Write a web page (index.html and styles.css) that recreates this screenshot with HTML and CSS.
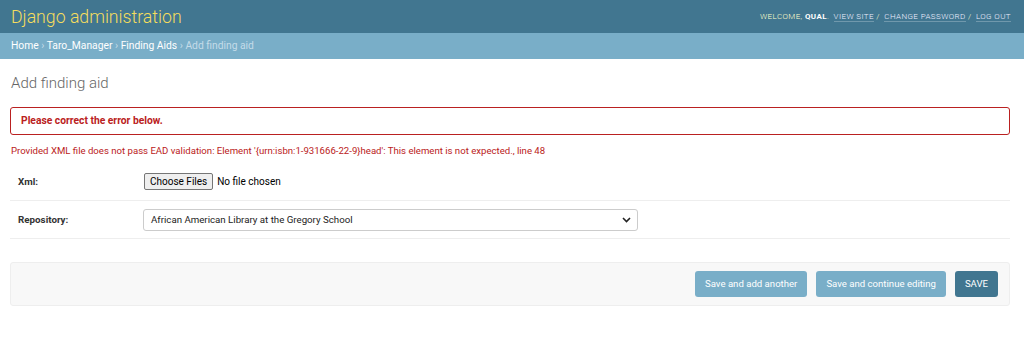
FILE: index.html
```html
<!DOCTYPE html>
<html lang="en">
<head>
<meta charset="utf-8">
<title>Add finding aid | Django site admin</title>
<link rel="stylesheet" href="styles.css">
</head>
<body>
<div id="header">
  <div id="branding"><h1 id="site-name"><a href="#">Django administration</a></h1></div>
  <div id="user-tools">
    Welcome, <strong>qual</strong>.
    <a href="#">View site</a> /
    <a href="#">Change password</a> /
    <a href="#">Log out</a>
  </div>
</div>

<div class="breadcrumbs">
  <a href="#">Home</a> &rsaquo; <a href="#">Taro_Manager</a> &rsaquo; <a href="#">Finding Aids</a> &rsaquo; Add finding aid
</div>

<div id="content">
  <h1>Add finding aid</h1>

  <form>
    <p class="errornote">Please correct the error below.</p>
    <ul class="errorlist nonfield">
      <li>Provided XML file does not pass EAD validation: Element '{urn:isbn:1-931666-22-9}head': This element is not expected., line 48</li>
    </ul>

    <fieldset class="module">
      <div class="form-row">
        <label class="required">Xml:</label>
        <div class="field">
          <span class="file-btn">Choose Files</span>
          <span class="file-none">No file chosen</span>
        </div>
      </div>
      <div class="form-row">
        <label class="required">Repository:</label>
        <div class="field">
          <div class="select">
            <span>African American Library at the Gregory School</span>
            <svg width="9" height="6" viewBox="0 0 9 6"><path d="M1 1l3.5 3.5L8 1" fill="none" stroke="#222" stroke-width="1.6"/></svg>
          </div>
        </div>
      </div>
    </fieldset>

    <div class="submit-row">
      <span class="btn">Save and add another</span>
      <span class="btn">Save and continue editing</span>
      <span class="btn default">SAVE</span>
    </div>
  </form>
</div>
</body>
</html>
```

FILE: styles.css
```css
body {
  margin: 0;
  font-family: Roboto, "Liberation Sans", Arial, sans-serif;
  font-size: 11px;
  color: #333;
  background: #fff;
}

a { text-decoration: none; }

#header {
  display: flex;
  align-items: center;
  justify-content: space-between;
  height: 33px;
  padding: 0 13px 0 11px;
  background: #417690;
  color: #ffc;
  box-sizing: border-box;
}

#site-name { margin: 0; font-size: 17.7px; font-weight: 300; }
#site-name a { color: #f5dd5d; }

#user-tools {
  font-size: 8px;
  font-weight: 300;
  letter-spacing: 0.4px;
  text-transform: uppercase;
  color: #ffc;
  padding-bottom: 1px;
}
#user-tools strong { font-weight: 700; color: #fff; }
#user-tools a {
  color: #eef;
  border-bottom: 1px solid rgba(255, 255, 255, 0.25);
  margin-left: 2px;
}

.breadcrumbs {
  height: 26px;
  line-height: 26px;
  padding: 0 11px;
  background: #79aec8;
  color: #c4dce8;
  font-size: 10.3px;
}
.breadcrumbs a { color: #fff; }

#content { padding: 14px 14px 0 10px; }

#content h1 {
  margin: 0 0 14px 1px;
  font-size: 15px;
  font-weight: 300;
  color: #666;
  line-height: 20px;
}

.errornote {
  margin: 0;
  height: 28px;
  line-height: 26px;
  padding: 0 10px;
  border: 1px solid #ba2121;
  border-radius: 3px;
  box-sizing: border-box;
  color: #ba2121;
  font-weight: 700;
  font-size: 10.3px;
}

.errorlist {
  list-style: none;
  margin: 10px 0 0 1px;
  padding: 0;
  color: #ba2121;
  font-size: 9.6px;
  line-height: 12px;
}

.module { border: 0; margin: 0; padding: 0; }

.form-row {
  display: flex;
  align-items: center;
  padding: 0 8px;
  border-bottom: 1px solid #eee;
}
.form-row:first-child { height: 37px; margin-top: 6px; }
.form-row:nth-child(2) { height: 37px; }

.form-row label {
  width: 126px;
  font-weight: 700;
  font-size: 9.8px;
  color: #333;
}

.field { display: flex; align-items: center; }

.file-btn {
  padding: 2px 5px;
  background: #efefef;
  border: 1px solid #767676;
  border-radius: 2px;
  font-size: 10px;
  color: #000;
  margin-right: 4px;
}
.file-none { font-size: 10px; color: #000; }

.select {
  display: flex;
  align-items: center;
  justify-content: space-between;
  width: 495px;
  height: 22px;
  padding: 0 6px 0 7px;
  border: 1px solid #ccc;
  border-radius: 3px;
  box-sizing: border-box;
  font-size: 9.7px;
  color: #222;
  margin-left: -1px;
}

.submit-row {
  display: flex;
  justify-content: flex-end;
  gap: 9px;
  margin-top: 23px;
  height: 44px;
  padding: 0 11px 0 0;
  align-items: center;
  background: #f8f8f8;
  border: 1px solid #eee;
  border-radius: 3px;
  box-sizing: border-box;
}

.btn {
  display: inline-block;
  height: 26px;
  line-height: 26px;
  padding: 0 10px;
  background: #79aec8;
  border-radius: 3px;
  color: #fff;
  font-size: 9.6px;
}
.btn.default { background: #417690; }
```
